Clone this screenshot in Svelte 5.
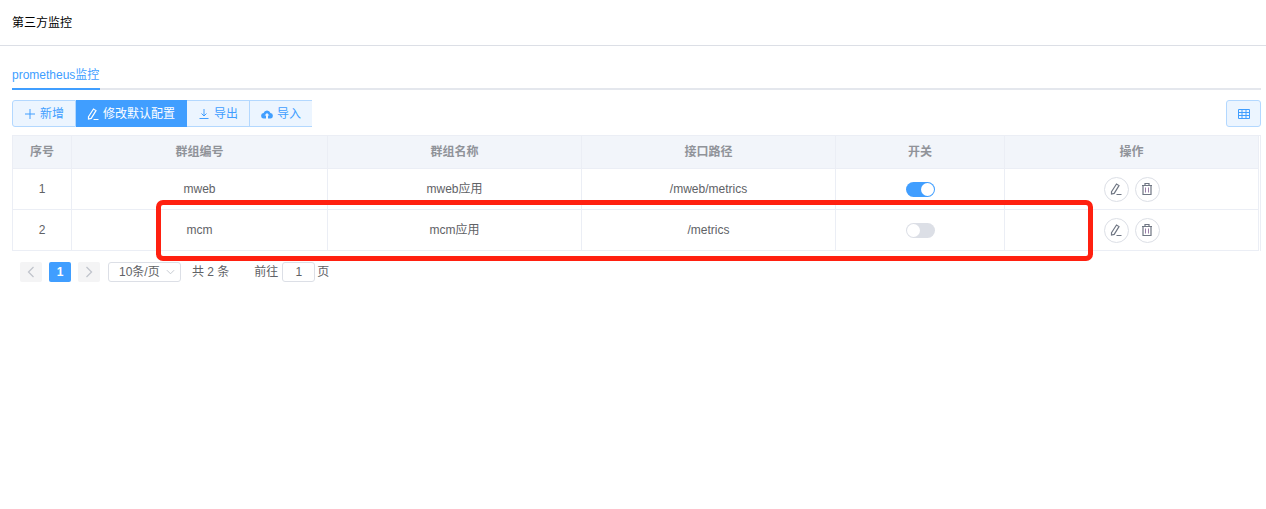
<script>
  const rows = [
    { id: 1, code: 'mweb', name: 'mweb应用', path: '/mweb/metrics', on: true },
    { id: 2, code: 'mcm', name: 'mcm应用', path: '/metrics', on: false }
  ]
</script>

<div class="page">
  <header class="title">第三方监控</header>

  <main class="content">
    <div class="tabs"><span class="tab">prometheus监控</span></div>

    <div class="toolbar">
      <div class="group">
        <button class="btn">
          <svg viewBox="0 0 12 12" width="12" height="12"><path d="M6 1v10M1 6h10" fill="none" stroke="currentColor" /></svg>
          新增
        </button>
        <button class="btn active">
          <svg viewBox="0 0 12 12" width="12" height="12"><path d="M1.500 8.800 6.500 1l2.500 1.600-4.800 7.800-2.700.6zM6.500 11.500h5" fill="none" stroke="currentColor" stroke-width="1.200" /></svg>
          修改默认配置
        </button>
        <button class="btn">
          <svg viewBox="0 0 12 12" width="12" height="12"><path d="M6 1v7M3.500 5.500 6 8l2.500-2.500M1.500 10.500h9" fill="none" stroke="currentColor" /></svg>
          导出
        </button>
        <button class="btn">
          <svg viewBox="0 0 12 12" width="12" height="12"><path d="M3 10.500a2.700 2.700 0 0 1-.4-5.400 3.500 3.500 0 0 1 6.800 0 2.700 2.700 0 0 1-.4 5.400H7V7.500h1.500L6 5 3.500 7.500H5v3z" fill="currentColor" /></svg>
          导入
        </button>
      </div>
      <button class="view">
        <svg viewBox="0 0 12 10" width="12" height="10"><path d="M.5.500h11v9H.5zM.5 3.500h11M.5 6.500h11M4 .5v9M8 .5v9" fill="none" stroke="currentColor" /></svg>
      </button>
    </div>

    <div class="table">
      <div class="row head">
        <div class="cell">序号</div>
        <div class="cell">群组编号</div>
        <div class="cell">群组名称</div>
        <div class="cell">接口路径</div>
        <div class="cell">开关</div>
        <div class="cell">操作</div>
      </div>
      {#each rows as row}
        <div class="row">
          <div class="cell">{row.id}</div>
          <div class="cell">{row.code}</div>
          <div class="cell">{row.name}</div>
          <div class="cell">{row.path}</div>
          <div class="cell"><span class="switch" class:on={row.on}></span></div>
          <div class="cell ops">
            <button class="round" aria-label="编辑">
              <svg viewBox="0 0 12 12" width="12" height="12"><path d="M1.500 8.800 6.500 1l2.500 1.600-4.800 7.800-2.700.6zM6.500 11.500h5" fill="none" stroke="#6f7683" stroke-width="1.200" /></svg>
            </button>
            <button class="round" aria-label="删除">
              <svg viewBox="0 0 12 12" width="12" height="12"><path d="M1 2.500h10M4 2.500v-2h4v2M2 2.500v9h8v-9" fill="none" stroke="#6f7683" stroke-width="1.200" /><path d="M4.500 4.500v5M7.500 4.500v5" fill="none" stroke="#9a7fa8" /></svg>
            </button>
          </div>
        </div>
      {/each}
    </div>

    <div class="pager">
      <button class="page-btn" aria-label="上一页">
        <svg viewBox="0 0 8 12" width="8" height="12"><path d="M6.500 1 1.500 6l5 5" fill="none" stroke="currentColor" stroke-width="1.300" /></svg>
      </button>
      <span class="page-num">1</span>
      <button class="page-btn" aria-label="下一页">
        <svg viewBox="0 0 8 12" width="8" height="12"><path d="M1.500 1l5 5-5 5" fill="none" stroke="currentColor" stroke-width="1.300" /></svg>
      </button>
      <span class="size">
        10条/页
        <svg viewBox="0 0 10 6" width="9" height="6"><path d="M1 1l4 4 4-4" fill="none" stroke="#c0c4cc" /></svg>
      </span>
      <span class="total">共 2 条</span>
      <span class="jump">前往<span class="jump-input">1</span>页</span>
    </div>
  </main>

  <div class="mark"></div>
</div>

<style>
  :global(body) {
    margin: 0;
    background: #fff;
  }

  .page {
    position: relative;
    height: 509px;
    overflow: hidden;
    font-family: "Liberation Sans", "Noto Sans CJK SC", sans-serif;
    font-size: 12px;
    line-height: 16px;
    color: #606266;
  }

  button {
    font: inherit;
    padding: 0;
    cursor: pointer;
  }

  .title {
    box-sizing: border-box;
    height: 46px;
    padding: 0 12px;
    line-height: 46px;
    color: #000;
    border-bottom: 1px solid #dcdfe6;
  }

  .content {
    padding: 0 5px 0 12px;
  }

  .tabs {
    height: 44px;
    display: flex;
    align-items: flex-end;
    border-bottom: 2px solid #e4e7ed;
    box-sizing: border-box;
  }

  .tab {
    height: 29px;
    line-height: 33px;
    margin-bottom: -2px;
    padding-right: 1px;
    color: #409eff;
    border-bottom: 2px solid #409eff;
  }

  .toolbar {
    display: flex;
    justify-content: space-between;
    margin-top: 10px;
  }

  .group {
    display: flex;
  }

  .btn {
    height: 27px;
    display: flex;
    align-items: center;
    gap: 4px;
    box-sizing: border-box;
    padding: 0 11px;
    color: #409eff;
    background: #ecf5ff;
    border: 1px solid #b3d8ff;
    border-left-width: 0;
  }

  .btn:first-child {
    border-left-width: 1px;
    border-radius: 3px 0 0 3px;
  }

  .btn:last-child {
    border-right: 0;
  }

  .btn.active {
    color: #fff;
    background: #409eff;
    border-color: #409eff;
  }

  .view {
    width: 35px;
    height: 27px;
    display: flex;
    align-items: center;
    justify-content: center;
    color: #409eff;
    background: #ecf5ff;
    border: 1px solid #b3d8ff;
    border-radius: 3px;
  }

  .table {
    margin-top: 8px;
    border: 1px solid #ebeef5;
    border-bottom: 0;
    padding-right: 1px;
  }

  .row {
    display: grid;
    grid-template-columns: 59px 256px 254px 254px 169px 1fr;
    height: 41px;
    box-sizing: border-box;
    border-bottom: 1px solid #ebeef5;
  }

  .row.head {
    height: 33px;
    background: #f2f5fa;
    color: #909399;
    font-weight: 700;
  }

  .cell {
    display: flex;
    align-items: center;
    justify-content: center;
    border-right: 1px solid #ebeef5;
  }

  .ops {
    gap: 6px;
  }

  .round {
    width: 25px;
    height: 25px;
    display: flex;
    align-items: center;
    justify-content: center;
    background: #fff;
    border: 1px solid #dcdfe6;
    border-radius: 50%;
  }

  .switch {
    position: relative;
    width: 29px;
    height: 15px;
    border-radius: 8px;
    background: #dcdfe6;
  }

  .switch::after {
    content: '';
    position: absolute;
    top: 1px;
    left: 1px;
    width: 13px;
    height: 13px;
    border-radius: 50%;
    background: #fff;
  }

  .switch.on {
    background: #409eff;
  }

  .switch.on::after {
    left: 15px;
  }

  .pager {
    display: flex;
    align-items: center;
    margin: 11px 0 0 8px;
    height: 20px;
  }

  .page-btn {
    width: 22px;
    height: 20px;
    display: flex;
    align-items: center;
    justify-content: center;
    color: #c0c4cc;
    background: #f4f4f5;
    border: 0;
    border-radius: 2px;
  }

  .page-num {
    width: 22px;
    height: 20px;
    margin: 0 7px;
    line-height: 20px;
    text-align: center;
    font-weight: 700;
    color: #fff;
    background: #409eff;
    border-radius: 2px;
  }

  .size {
    width: 73px;
    height: 20px;
    margin-left: 8px;
    box-sizing: border-box;
    display: flex;
    align-items: center;
    justify-content: space-between;
    padding: 0 5px 0 10px;
    border: 1px solid #dcdfe6;
    border-radius: 3px;
  }

  .total {
    margin-left: 11px;
  }

  .jump {
    display: flex;
    align-items: center;
    gap: 3px;
    margin-left: 25px;
  }

  .jump-input {
    width: 33px;
    height: 20px;
    margin-left: 1px;
    margin-right: -1px;
    box-sizing: border-box;
    line-height: 18px;
    text-align: center;
    border: 1px solid #dcdfe6;
    border-radius: 3px;
  }

  /* red annotation drawn on top of the table */
  .mark {
    position: absolute;
    left: 156px;
    top: 200px;
    width: 937px;
    height: 61px;
    box-sizing: border-box;
    border: 5px solid #ff2010;
    border-radius: 7px;
  }
</style>
